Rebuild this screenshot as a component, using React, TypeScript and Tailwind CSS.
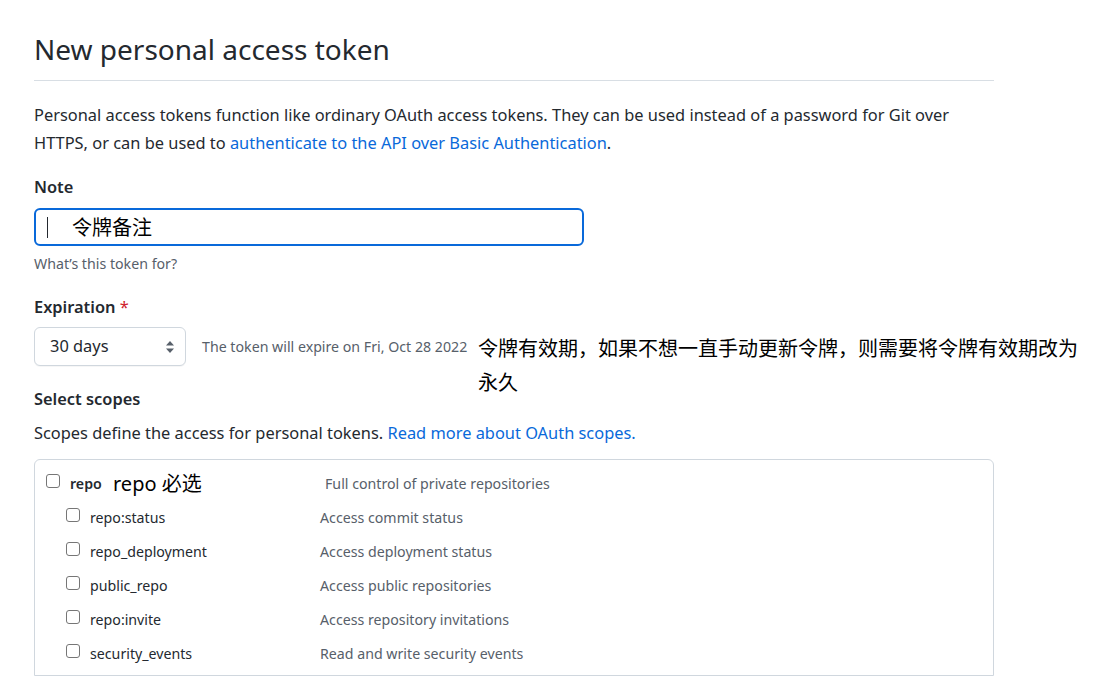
import { useState } from 'react';

const scopes = [
  { name: 'repo:status', desc: 'Access commit status' },
  { name: 'repo_deployment', desc: 'Access deployment status' },
  { name: 'public_repo', desc: 'Access public repositories' },
  { name: 'repo:invite', desc: 'Access repository invitations' },
  { name: 'security_events', desc: 'Read and write security events' },
];

function Checkbox() {
  const [checked, setChecked] = useState(false);
  return (
    <button
      type="button"
      onClick={() => setChecked(!checked)}
      className={`w-[14px] h-[14px] shrink-0 -translate-y-[3px] rounded-[3px] border border-[#767676] ${checked ? 'bg-[#0969da] border-[#0969da]' : 'bg-white'}`}
    />
  );
}

export default function App() {
  return (
    <div className="min-h-screen bg-white text-[#24292f] font-['Noto_Sans','Noto_Sans_CJK_SC',sans-serif]">
      <div className="w-[960px] ml-[34px] relative">
        {/* Header */}
        <div className="pt-[29px] pb-[11px] border-b border-[#d8dee4]">
          <h1 className="text-[28px] leading-[40px] font-normal">New personal access token</h1>
        </div>

        <p className="mt-[20px] text-[16.4px] leading-[28px]">
          Personal access tokens function like ordinary OAuth access tokens. They can be used instead of a password for Git over
          HTTPS, or can be used to <a href="#" className="text-[#0969da]">authenticate to the API over Basic Authentication</a>.
        </p>

        {/* Note */}
        <div className="mt-[18px] text-[16.4px] leading-[24px] font-semibold">Note</div>
        <div className="mt-[9px] w-[550px] h-[38px] rounded-[6px] border-2 border-[#0969da] flex items-center pl-[11px]">
          <span className="w-px h-[21px] bg-[#24292f]" />
          <span className="ml-[24px] text-[20px] font-['Noto_Sans_CJK_SC',sans-serif] text-black">令牌备注</span>
        </div>
        <div className="mt-[8px] text-[14.2px] leading-[20px] text-[#57606a]">What’s this token for?</div>

        {/* Expiration */}
        <div className="mt-[21px] text-[16.4px] leading-[24px] font-semibold">
          Expiration <span className="text-[#cf222e] font-normal">*</span>
        </div>
        <div className="mt-[8px] flex items-center relative">
          <div className="w-[152px] h-[39px] rounded-[6px] border border-[#d0d7de] bg-white flex items-center justify-between pl-[15px] pr-[10px] shadow-[0_1px_0_rgba(27,31,36,0.04)]">
            <span className="text-[16.4px]">30 days</span>
            <svg width="10" height="14" viewBox="0 0 10 14" fill="#57606a">
              <path d="M5 1 L9 5.5 H1 Z" />
              <path d="M5 13 L9 8.5 H1 Z" />
            </svg>
          </div>
          <span className="ml-[16px] text-[14.2px] text-[#57606a]">The token will expire on Fri, Oct 28 2022</span>
          <div className="absolute left-[444px] top-[4px] w-[610px] text-[20px] leading-[34px] text-black font-['Noto_Sans_CJK_SC',sans-serif]">
            令牌有效期，如果不想一直手动更新令牌，则需要将令牌有效期改为永久
          </div>
        </div>

        {/* Scopes */}
        <div className="mt-[21px] text-[16.4px] leading-[24px] font-semibold">Select scopes</div>
        <p className="mt-[10px] text-[16.4px] leading-[24px]">
          Scopes define the access for personal tokens.{' '}
          <a href="#" className="text-[#0969da]">Read more about OAuth scopes.</a>
        </p>

        <div className="mt-[14px] h-[217px] border border-[#d0d7de] rounded-t-[6px] pt-[7px]">
          <div className="h-[34px] flex items-center pl-[11px]">
            <Checkbox />
            <span className="ml-[10px] w-[36px] text-[14.2px] font-semibold">repo</span>
            <span className="ml-[7px] w-[212px] text-[20px] text-black">repo 必选</span>
            <span className="text-[14.2px] text-[#57606a]">Full control of private repositories</span>
          </div>
          {scopes.map((s) => (
            <div key={s.name} className="h-[34px] flex items-center pl-[31px]">
              <Checkbox />
              <span className="ml-[10px] w-[230px] text-[14.2px]">{s.name}</span>
              <span className="text-[14.2px] text-[#57606a]">{s.desc}</span>
            </div>
          ))}
        </div>
      </div>
    </div>
  );
}
